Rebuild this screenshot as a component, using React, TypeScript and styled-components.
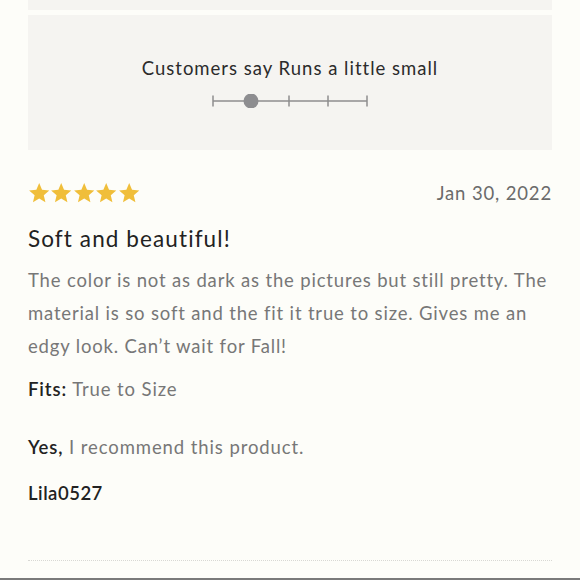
import React from "react";
import styled, { createGlobalStyle } from "styled-components";

const Global = createGlobalStyle`
  html, body { margin: 0; padding: 0; background: #fdfdf9; }
  body { font-family: Lato, "Noto Sans", sans-serif; -webkit-font-smoothing: antialiased; }
`;

const Page = styled.div`
  width: 580px;
  height: 580px;
  box-sizing: border-box;
  padding: 0 28px;
  display: flex;
  flex-direction: column;
  border-bottom: 2px solid #7a7a7a;
  overflow: hidden;
`;

const TopPanel = styled.div`
  height: 10px;
  background: #f5f4f1;
  margin-bottom: 5px;
`;

const FitPanel = styled.div`
  height: 135px;
  background: #f5f4f1;
  display: flex;
  flex-direction: column;
  align-items: center;
  padding-top: 42px;
  box-sizing: border-box;
`;

const FitText = styled.div`
  font-size: 18.5px;
  color: #2b2b2b;
  letter-spacing: 1px;
  line-height: 22px;
`;

const Scale = styled.svg`
  margin-top: 15px;
  display: block;
`;

const Review = styled.div`
  padding-top: 31px;
  display: flex;
  flex-direction: column;
  flex: 1;
`;

const HeaderRow = styled.div`
  display: flex;
  justify-content: space-between;
  align-items: center;
  height: 24px;
`;

const Stars = styled.div`
  display: flex;
`;

const DateText = styled.div`
  font-size: 18.5px;
  color: #6b6b6b;
  letter-spacing: 0.85px;
`;

const Title = styled.h2`
  margin: 20px 0 0;
  font-size: 22.5px;
  font-weight: 400;
  color: #222;
  letter-spacing: 1.1px;
  line-height: 28px;
`;

const Body = styled.p`
  margin: 11px 0 0;
  font-size: 18.5px;
  line-height: 33px;
  color: #777;
  letter-spacing: 0.83px;
`;

const Line = styled.div<{ $top: number }>`
  margin-top: ${(p) => p.$top}px;
  font-size: 18.5px;
  line-height: 24px;
  color: #777;
  letter-spacing: 0.9px;
`;

const Strong = styled.span`
  color: #222;
  font-weight: 600;
`;

const Author = styled.div`
  margin-top: 22px;
  font-size: 18.5px;
  line-height: 24px;
  color: #222;
  font-weight: 600;
  letter-spacing: 0.5px;
`;

const Divider = styled.div`
  margin-top: auto;
  margin-bottom: 17px;
  border-top: 1px dotted #d8d8d4;
`;

const Star = () => (
  <svg width="22.4" height="22" viewBox="0 0 24 24">
    <path
      d="M12 1.2l3.1 7.3 7.9.7-6 5.2 1.8 7.8L12 18.1l-6.8 4.1 1.8-7.8-6-5.2 7.9-.7z"
      fill="#f0be3a"
    />
  </svg>
);

export default function App() {
  return (
    <>
      <Global />
      <Page>
        <TopPanel />
        <FitPanel>
          <FitText>Customers say Runs a little small</FitText>
          <Scale width="156" height="14" viewBox="0 0 156 14">
            <line x1="1" y1="7" x2="155" y2="7" stroke="#8e8e8e" strokeWidth="1.5" />
            {[1, 77, 116, 155].map((x) => (
              <line key={x} x1={x} y1="1.5" x2={x} y2="12.5" stroke="#8e8e8e" strokeWidth="1.5" />
            ))}
            <circle cx="39" cy="7" r="7.5" fill="#8d8d90" />
          </Scale>
        </FitPanel>
        <Review>
          <HeaderRow>
            <Stars>
              {[0, 1, 2, 3, 4].map((i) => (
                <Star key={i} />
              ))}
            </Stars>
            <DateText>Jan 30, 2022</DateText>
          </HeaderRow>
          <Title>Soft and beautiful!</Title>
          <Body>
            The color is not as dark as the pictures but still pretty. The material is so soft and
            the fit it true to size. Gives me an edgy look. Can’t wait for Fall!
          </Body>
          <Line $top={14}>
            <Strong>Fits:</Strong> True to Size
          </Line>
          <Line $top={34}>
            <Strong>Yes,</Strong> I recommend this product.
          </Line>
          <Author>Lila0527</Author>
          <Divider />
        </Review>
      </Page>
    </>
  );
}
